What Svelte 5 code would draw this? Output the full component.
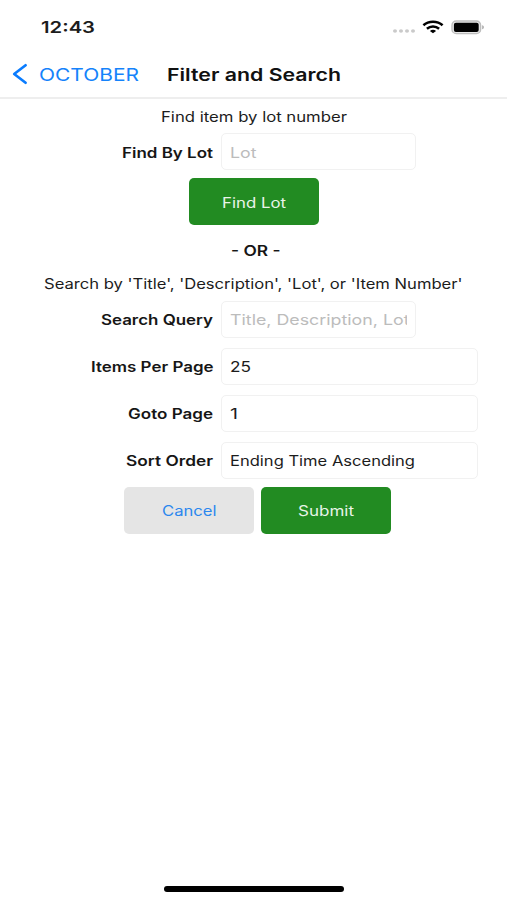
<script>
  const fields = [
    { label: 'Items Per Page', labelWidth: 122.5, value: '25', valueWidth: 21 },
    { label: 'Goto Page', labelWidth: 85, value: '1', valueWidth: 8 },
    { label: 'Sort Order', labelWidth: 87, value: 'Ending Time Ascending', valueWidth: 185 }
  ];

  // Widens a line of text so it spans exactly the given width.
  function span(node, width) {
    const natural = node.offsetWidth;
    const exact = node.getBoundingClientRect().width || natural;
    node.style.transform = `scaleX(${width / exact})`;
  }
</script>

{#snippet wide(text, width)}
  <span class="wide" style="width: {width}px"><span class="ink" use:span={width}>{text}</span></span>
{/snippet}

<div class="screen">
  <header>
    <div class="status">
      <div class="clock">{@render wide('12:43', 54)}</div>
      <div class="indicators">
        <svg class="dots" width="24" height="6" viewBox="0 0 24 6" fill="#cacaca">
          <ellipse cx="3" cy="3" rx="2" ry="1.7" /><ellipse cx="9" cy="3" rx="2" ry="1.7" />
          <ellipse cx="15" cy="3" rx="2" ry="1.7" /><ellipse cx="21" cy="3" rx="2" ry="1.7" />
        </svg>
        <svg class="wifi" width="22" height="14" viewBox="0 0 22 14" fill="none" stroke="#000" stroke-width="2.5">
          <path d="M1.4 5.2C6.6 0.5 15.4 0.5 20.6 5.2" />
          <path d="M4.9 8.8C8.4 5.8 13.6 5.8 17.1 8.8" />
          <path d="M11 13.2L7.9 11C9.6 9.4 12.4 9.4 14.1 11Z" fill="#000" stroke="none" />
        </svg>
        <svg class="battery" width="34" height="15" viewBox="0 0 34 15">
          <rect x="1" y="1" width="28.6" height="12.6" rx="4.2" fill="#e8e8e8" stroke="#bdbdbd" stroke-width="1.4" />
          <rect x="2.9" y="2.7" width="24.8" height="9.2" rx="2" fill="#000" />
          <path d="M31.2 5.3C33.4 5.8 33.4 8.8 31.2 9.3Z" fill="#aaa" />
        </svg>
      </div>
    </div>
    <nav>
      <svg class="chevron" width="16" height="22" viewBox="0 0 16 22" fill="none" stroke="#0a7cff" stroke-width="2.7" stroke-linecap="round" stroke-linejoin="round">
        <path d="M13.6 2.2L2.2 11L13.6 19.8" />
      </svg>
      <div class="back">{@render wide('OCTOBER', 100)}</div>
      <h1>{@render wide('Filter and Search', 174)}</h1>
    </nav>
  </header>

  <main>
    <div class="note">{@render wide('Find item by lot number', 186)}</div>
    <div class="row">
      <div class="label">{@render wide('Find By Lot', 91)}</div>
      <div class="input short hint">{@render wide('Lot', 26.5)}</div>
    </div>
    <div class="buttons first"><div class="button green">{@render wide('Find Lot', 64)}</div></div>
    <div class="or">{@render wide('- OR -', 49.5)}</div>
    <div class="note second">{@render wide("Search by 'Title', 'Description', 'Lot', or 'Item Number'", 418.5)}</div>
    <div class="row">
      <div class="label">{@render wide('Search Query', 112)}</div>
      <div class="input short hint"><div class="clip">{@render wide('Title, Description, Lot', 179.5)}</div></div>
    </div>
    {#each fields as field}
      <div class="row">
        <div class="label">{@render wide(field.label, field.labelWidth)}</div>
        <div class="input">{@render wide(field.value, field.valueWidth)}</div>
      </div>
    {/each}
    <div class="buttons">
      <div class="button gray">{@render wide('Cancel', 54.5)}</div>
      <div class="button green">{@render wide('Submit', 56)}</div>
    </div>
  </main>

  <footer><div class="home"></div></footer>
</div>

<style>
  :global(body) { margin: 0; background: #fff; }
  .screen {
    width: 507px;
    height: 900px;
    display: flex;
    flex-direction: column;
    box-sizing: border-box;
    overflow: hidden;
    background: #fff;
    color: #1c1c1c;
    font: 14px/20px Inter, "Liberation Sans", sans-serif;
  }
  .wide { display: inline-block; white-space: nowrap; vertical-align: top; }
  .ink { display: inline-block; transform-origin: 0 50%; vertical-align: top; }
  header { height: 96.5px; flex: none; border-bottom: 2px solid #eee; }
  .status { height: 52px; display: flex; justify-content: space-between; padding: 0 22.5px 0 40.5px; }
  .clock { padding-top: 17px; font-size: 16px; font-weight: 600; }
  .indicators { display: flex; align-items: flex-start; }
  .dots { margin-top: 28px; }
  .wifi { margin: 19.5px 0 0 6px; }
  .battery { margin: 19.5px 0 0 7px; }
  nav { height: 44px; display: flex; align-items: center; padding-left: 12px; }
  .back { margin-left: 10.5px; padding-top: 1px; color: #1583fb; font-size: 17px; }
  h1 { margin: 0 0 0 28px; padding-top: 1px; font-size: 17px; line-height: 20px; font-weight: 600; color: #111; }
  main { flex: 1; }
  .note { height: 20px; padding-top: 8px; display: flex; justify-content: center; }
  .row { display: flex; align-items: center; height: 37px; margin-bottom: 10px; }
  .note + .row { margin-top: 6.5px; }
  .label { width: 213px; padding-top: 2px; display: flex; justify-content: flex-end; font-weight: 600; color: #161616; }
  .input {
    box-sizing: border-box;
    width: 257px;
    height: 37px;
    margin-left: 8px;
    padding: 2px 8px 0;
    display: flex;
    align-items: center;
    border: 1.5px solid #f1f1f1;
    border-radius: 5px;
  }
  .input.short { width: 195px; }
  .hint { color: #bcbcbc; font-size: 14.5px; }
  .clip { width: 177px; height: 20px; overflow: hidden; }
  .buttons { display: flex; justify-content: center; gap: 7.5px; margin-top: -2px; padding-left: 8px; }
  .buttons.first { padding-left: 0; }
  .button {
    box-sizing: border-box;
    width: 130px;
    height: 47px;
    padding-top: 2px;
    display: flex;
    align-items: center;
    justify-content: center;
    border-radius: 5px;
  }
  .green { background: #228b22; color: #e9f4e9; }
  .gray { background: #e5e5e5; color: #2b87ee; }
  .or { display: flex; justify-content: center; margin-top: 15.5px; padding-left: 4px; font-weight: 600; color: #161616; }
  .note.second { margin-top: 5.8px; }
  footer { height: 15px; display: flex; justify-content: center; }
  .home { width: 180px; height: 6px; border-radius: 3px; background: #000; margin-top: 0.5px; }
</style>
